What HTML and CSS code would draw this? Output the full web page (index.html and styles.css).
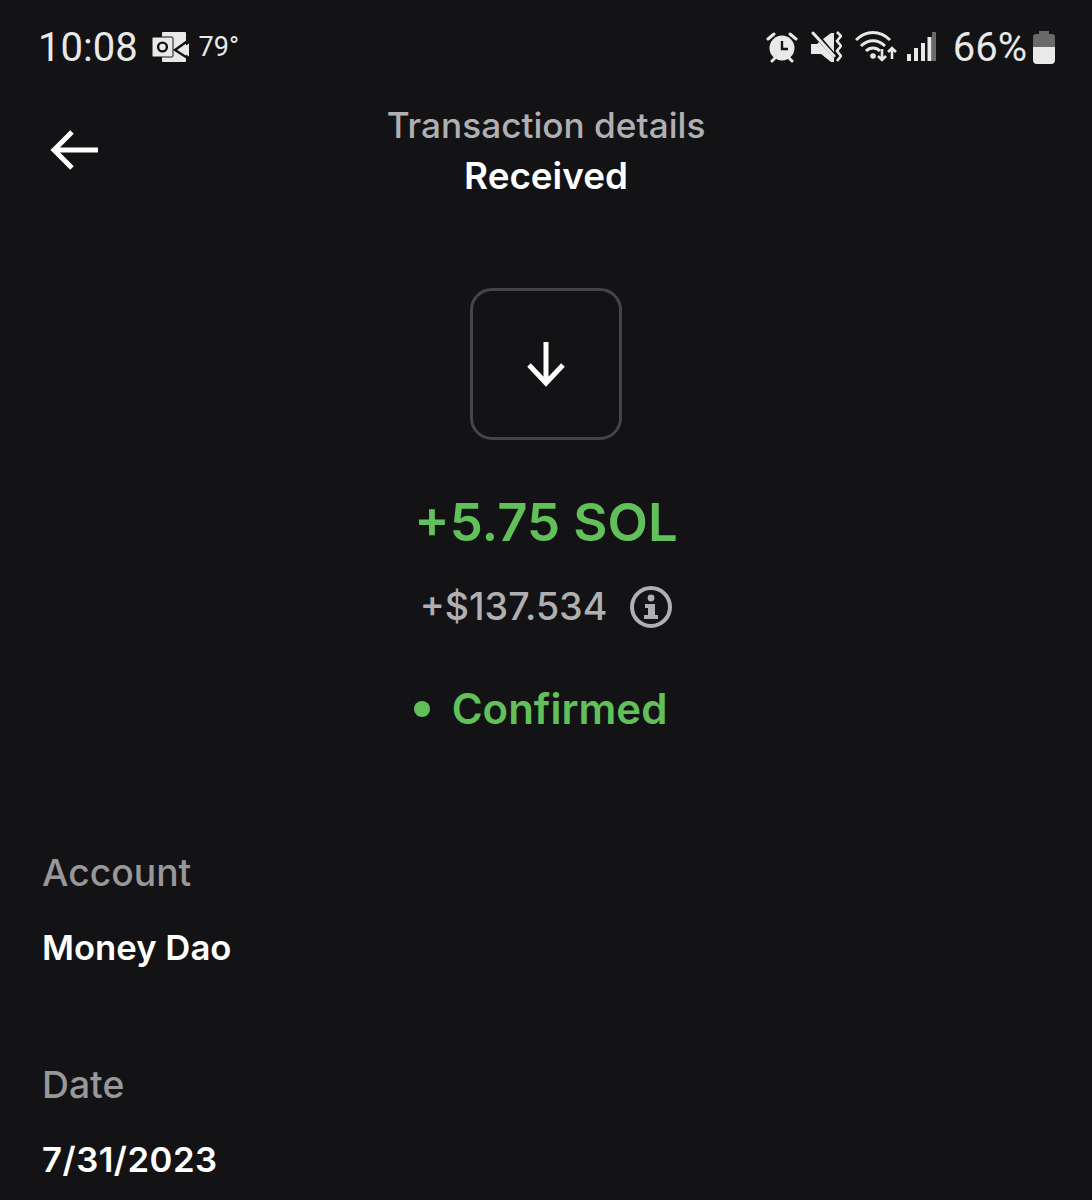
FILE: index.html
```html
<!DOCTYPE html>
<html lang="en">
<head>
  <meta charset="UTF-8" />
  <meta name="viewport" content="width=device-width, initial-scale=1.0"/>
  <title>Transaction details</title>
  <link rel="stylesheet" href="styles.css">
</head>
<body>

  <div class="status-bar">
    <div class="status-left">
      <span class="clock">10:08</span>
      <!-- mail app notification -->
      <svg class="ico-mail" viewBox="0 0 38 30" width="38" height="30">
        <rect x="10" y="0" width="24" height="30" rx="1" fill="#e9e9e9"/>
        <path d="M37 8L23 18l14 9" fill="none" stroke="#131315" stroke-width="2.4"/>
        <path d="M37 11.5L27 18l10 6.5z" fill="#e9e9e9"/>
        <rect x="0" y="5" width="21" height="20" rx="1" fill="#e9e9e9" stroke="#131315" stroke-width="1"/>
        <circle cx="10.5" cy="15" r="4.4" fill="none" stroke="#131315" stroke-width="2.4"/>
      </svg>
      <span class="temp">79°</span>
    </div>
    <div class="status-right">
      <!-- alarm -->
      <svg class="ico-alarm" viewBox="0 0 32 32" width="32" height="32">
        <circle cx="16" cy="17" r="12.5" fill="#e9e9e9"/>
        <path d="M16 10v8h6" fill="none" stroke="#131315" stroke-width="2.4"/>
        <path d="M2 8l6-5M30 8l-6-5M6 30l3-3M26 30l-3-3" stroke="#e9e9e9" stroke-width="3" stroke-linecap="round"/>
      </svg>
      <!-- vibrate / mute -->
      <svg class="ico-mute" viewBox="0 0 32 32" width="32" height="32">
        <path fill="#e9e9e9" d="M1 13h6l2-2 15 16v4h-3L11 23H1z"/>
        <path fill="#e9e9e9" d="M13 8l8-6h3v19z"/>
        <path d="M3 2l21 23" stroke="#e9e9e9" stroke-width="3" stroke-linecap="round"/>
        <path d="M27 1l4 4-4 5 4 5-4 5 4 5-4 5" fill="none" stroke="#e9e9e9" stroke-width="2.6"/>
      </svg>
      <!-- wifi with arrows -->
      <svg class="ico-wifi" viewBox="0 0 44 32" width="44" height="32">
        <g fill="none" stroke="#e9e9e9" stroke-width="3">
          <path d="M1 9c10-10 24-10 34 0"/>
          <path d="M6 15c7-7 17-7 24 0"/>
          <path d="M11 20c4-4 10-4 14 0"/>
        </g>
        <g fill="none" stroke="#e9e9e9" stroke-width="2.6">
          <path d="M27 18v11M23 25l4 4 4-4"/>
          <path d="M37 28v-11M33 21l4-4 4 4"/>
        </g>
        <circle cx="18" cy="25" r="2.8" fill="#e9e9e9"/>
      </svg>
      <!-- signal bars -->
      <svg class="ico-signal" viewBox="0 0 30 32" width="30" height="32">
        <rect x="1" y="23" width="4" height="7" fill="#e9e9e9"/>
        <rect x="8" y="17" width="4" height="13" fill="#e9e9e9"/>
        <rect x="15" y="12" width="4" height="18" fill="#e9e9e9"/>
        <rect x="21.5" y="6" width="4" height="24" fill="#e9e9e9"/>
        <rect x="26" y="1" width="4" height="29" fill="#6a6a6a"/>
      </svg>
      <span class="battery-pct">66%</span>
      <!-- battery, lower part filled -->
      <svg class="ico-battery" viewBox="0 0 22 33" width="22" height="33">
        <path d="M6 0h10v3h3a3 3 0 0 1 3 3v10H0V6a3 3 0 0 1 3-3h3z" fill="#6a6a6a"/>
        <path d="M0 16h22v13a4 4 0 0 1-4 4H4a4 4 0 0 1-4-4z" fill="#e9e9e9"/>
      </svg>
    </div>
  </div>

  <div class="top-bar">
    <svg class="back" viewBox="0 0 50 42" width="50" height="42">
      <path d="M48 21H4M22 3L4 21l18 18" fill="none" stroke="#fff" stroke-width="5"/>
    </svg>
    <div class="top-title">
      <div class="top-sub">Transaction details</div>
      <div class="top-main">Received</div>
    </div>
  </div>

  <div class="summary">
    <div class="tx-icon">
      <svg viewBox="0 0 38 46" width="38" height="46">
        <path d="M19 1v41M2 24l17 18 17-18" fill="none" stroke="#fff" stroke-width="5"/>
      </svg>
    </div>
    <div class="amount">+5.75 SOL</div>
    <div class="fiat">
      <span>+$137.534</span>
      <svg viewBox="0 0 42 42" width="42" height="42">
        <circle cx="21" cy="21" r="19" fill="none" stroke="#b0b0b2" stroke-width="4"/>
        <circle cx="21" cy="12" r="3.4" fill="#b0b0b2"/>
        <path d="M15 18h10v11h3v4H14v-4h4v-7h-3z" fill="#b0b0b2"/>
      </svg>
    </div>
    <div class="status"><span class="dot"></span>Confirmed</div>
  </div>

  <div class="field field-first">
    <div class="label">Account</div>
    <div class="value">Money Dao</div>
  </div>
  <div class="field">
    <div class="label">Date</div>
    <div class="value value-date">7/31/2023</div>
  </div>

</body>
</html>
```

FILE: styles.css
```css
html, body {
  margin: 0;
  height: 1200px;
  overflow: hidden;
}
body {
  font-family: Inter, "Liberation Sans", sans-serif;
  background: #131315;
  color: #fff;
}
.status-bar {
  display: flex;
  justify-content: space-between;
  align-items: center;
  height: 94px;
  padding: 0 37px 0 38px;
  font-family: Roboto, sans-serif;
  color: #e9e9e9;
}
.status-left, .status-right {
  display: flex;
  align-items: center;
}
.clock {
  font-size: 40px;
}
.ico-mail {
  margin-left: 14px;
}
.temp {
  font-size: 27px;
  margin-left: 9px;
}
.ico-mute {
  margin-left: 12px;
}
.ico-wifi {
  margin-left: 13px;
}
.ico-signal {
  margin-left: 7px;
}
.battery-pct {
  font-size: 40px;
  margin-left: 17px;
}
.ico-battery {
  margin-left: 6px;
}
.top-bar {
  display: grid;
  grid-template-columns: 1fr auto 1fr;
  align-items: center;
  padding: 4px 50px 0;
  height: 106px;
}
.back {
  margin-top: -2px;
}
.top-title {
  text-align: center;
}
.top-sub {
  font-size: 35.2px;
  font-weight: 500;
  color: #b0b0b2;
  line-height: 50px;
}
.top-main {
  font-size: 36.8px;
  font-weight: 600;
  line-height: 52px;
}
.summary {
  display: flex;
  flex-direction: column;
  align-items: center;
  margin-top: 84px;
}
.tx-icon {
  display: flex;
  align-items: center;
  justify-content: center;
  box-sizing: border-box;
  width: 152px;
  height: 152px;
  border: 3px solid #444547;
  border-radius: 22px;
}
.amount {
  margin-top: 50px;
  font-size: 52.6px;
  font-weight: 600;
  line-height: 64px;
  color: #62c05b;
}
.fiat {
  display: flex;
  align-items: center;
  gap: 23px;
  margin-top: 30px;
  font-size: 37.6px;
  font-weight: 500;
  line-height: 46px;
  color: #b0b0b2;
}
.status {
  display: flex;
  align-items: center;
  margin-top: 54px;
  margin-right: 11px;
  font-size: 42px;
  font-weight: 600;
  line-height: 50px;
  color: #62c05b;
}
.dot {
  width: 16px;
  height: 16px;
  margin-right: 22px;
  border-radius: 50%;
  background: #62c05b;
}
.field {
  padding-left: 42px;
  margin-top: 92px;
}
.field-first {
  margin-top: 115px;
}
.label {
  font-size: 37.3px;
  font-weight: 500;
  color: #98989a;
  line-height: 48px;
}
.value {
  margin-top: 28px;
  font-size: 34.7px;
  font-weight: 600;
  line-height: 44px;
}
.value-date {
  letter-spacing: 0.5px;
}
```
